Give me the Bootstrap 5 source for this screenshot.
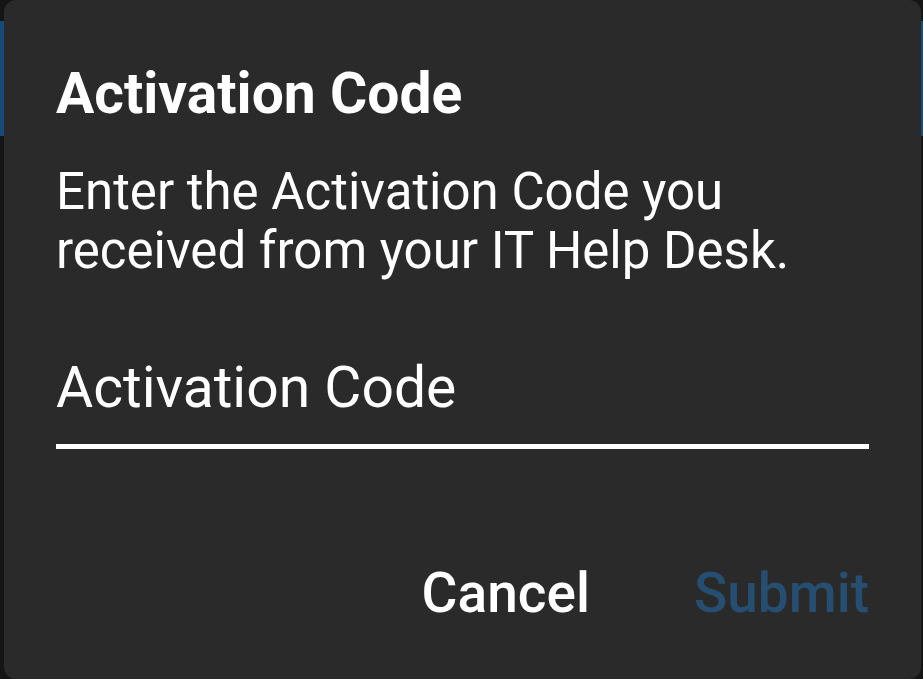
<!DOCTYPE html>
<html lang="en">
<head>
<meta charset="utf-8">
<meta name="viewport" content="width=device-width, initial-scale=1">
<title>Activation Code</title>
<link href="https://cdn.jsdelivr.net/npm/bootstrap@5.3.0/dist/css/bootstrap.min.css" rel="stylesheet">
<style>
body { font-family: Roboto, sans-serif; background: linear-gradient(#151515 21px, #164b77 21px 136px, #151515 136px); padding: 0 2px 0 4px; }
.dialog-panel { background: #2a2a2a; border-radius: 12px; padding: 60px 52px 40px; }
.dialog-title { font-size: 57px; line-height: 68px; font-weight: 700; }
.dialog-text { font-size: 51px; line-height: 59px; margin-top: 34px; }
.code-input { font-size: 57px; line-height: 68px; height: 96px; margin-top: 73px; padding: 0 0 23px; border-bottom: 5px solid #fff; outline: 0; }
.code-input::placeholder { color: #fff; opacity: 1; }
.dialog-actions { gap: 104px; margin-top: 110px; }
.dialog-button { font-size: 55px; line-height: 68px; font-weight: 500; }
.dialog-button:disabled { color: #264e70; }
</style>
</head>
<body class="min-vh-100 d-flex flex-column">
<main class="dialog-panel flex-grow-1 text-white" role="dialog" aria-labelledby="title" aria-describedby="message">
<form>
<h1 class="dialog-title mb-0" id="title">Activation Code</h1>
<p class="dialog-text mb-0" id="message">Enter the Activation Code you received from your IT Help Desk.</p>
<input class="code-input d-block w-100 bg-transparent border-top-0 border-start-0 border-end-0 rounded-0 text-white" type="text" placeholder="Activation Code" aria-label="Activation Code">
<div class="dialog-actions d-flex justify-content-end">
<button class="dialog-button border-0 bg-transparent p-0 text-white" type="button">Cancel</button>
<button class="dialog-button border-0 bg-transparent p-0" type="submit" disabled>Submit</button>
</div>
</form>
</main>
<script src="https://cdn.jsdelivr.net/npm/bootstrap@5.3.0/dist/js/bootstrap.bundle.min.js"></script>
</body>
</html>
